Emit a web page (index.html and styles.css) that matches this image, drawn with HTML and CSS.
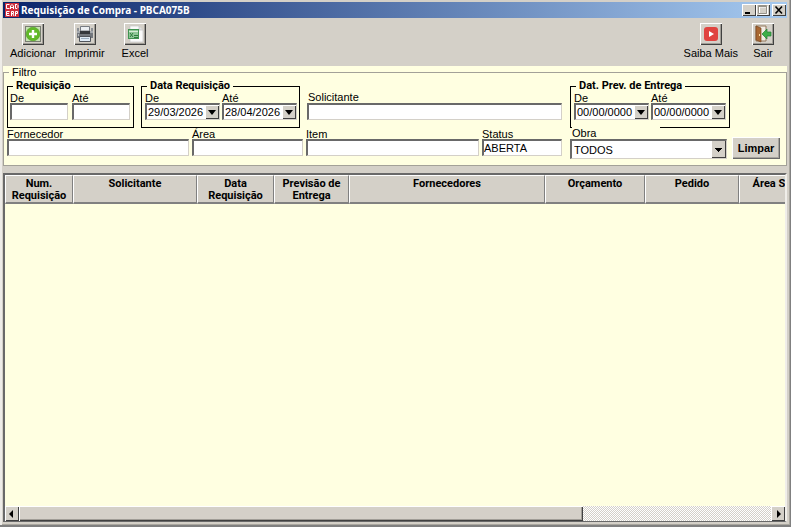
FILE: index.html
```html
<!DOCTYPE html>
<html lang="pt-BR">
<head>
<meta charset="utf-8">
<title>Requisição de Compra - PBCA075B</title>
<link rel="stylesheet" href="styles.css">
</head>
<body>
<main class="window">
  <header class="titlebar">
    <svg class="app-icon" viewBox="0 0 14 14" aria-hidden="true"><rect width="14" height="14" fill="#cf2c3c"/><g fill="none" stroke="#fff"><path d="M4.500 1.500H1.500V5.500H4.500M5.500 6V3L7 1.500L8.500 3V6M5.500 4.500H8.500M10.500 1.500V5.500H12L13 4.500V2.500L12 1.500H10M4.500 8.500H1.500V12.500H4.500M1.500 10.500H4M6.500 13V8.500H8.500V10.500H6.500M8 11L9 13M10.500 13V8.500H12.500V10.500H10.500"/></g></svg>
    <h1 class="title">Requisição de Compra - PBCA075B</h1>
    <div class="controls">
      <button class="control" type="button" aria-label="Minimizar"><svg viewBox="0 0 12 10"><path d="M2 8H7" stroke="#000" stroke-width="2"/></svg></button>
      <button class="control" type="button" aria-label="Maximizar"><svg viewBox="0 0 12 10"><path d="M2.500 1.500H10.500V9.500H2.500ZM2 2H11" stroke="#fff" fill="none"/><path d="M1.500 0.500H9.500V8.500H1.500ZM1 1.500H10" stroke="#969289" fill="none"/></svg></button>
      <button class="control close" type="button" aria-label="Fechar"><svg viewBox="0 0 12 10"><path d="M2.500 1.500L9 8.500M9 1.500L2.500 8.500" stroke="#000" stroke-width="1.600"/></svg></button>
    </div>
  </header>

  <nav class="toolbar">
    <button class="tool" type="button">
      <span class="tool-face"><svg viewBox="0 0 18 18"><rect x="1.500" y="1.500" width="15" height="15" fill="#c8e2b4" stroke="#222" stroke-dasharray="1 1"/><circle cx="9" cy="9" r="6.800" fill="#62b928" stroke="#4c9e1f" stroke-width=".6"/><path d="M9 5V13M5 9H13" stroke="#fff" stroke-width="2.400"/></svg></span>
      Adicionar
    </button>
    <button class="tool" type="button">
      <span class="tool-face"><svg viewBox="0 0 18 18"><path d="M4.500 1.500H13.500V6H4.500Z" fill="#eceff2" stroke="#777b82"/><path d="M1 3H3V7H1ZM15 3H17V7H15Z" fill="#8c9096"/><path d="M1 6H17V13H1Z" fill="#73777d"/><path d="M1 6H17V8H1Z" fill="#a5a9ae"/><path d="M4 6H14V9H4Z" fill="#34373c"/><path d="M3.500 11.500H14.500V16.500H3.500Z" fill="#dfeaf5" stroke="#50545b"/><path d="M5 13.500H13" stroke="#9cafc2"/><path d="M2 10H3" stroke="#fff"/></svg></span>
      Imprimir
    </button>
    <button class="tool excel" type="button">
      <span class="tool-face"><svg viewBox="0 0 18 18"><path d="M4 1H13L17 5V17H4Z" fill="#fafafa" stroke="#c4c4c4" stroke-width=".7"/><path d="M13 1V5H17" fill="#e0e0e0" stroke="#bbb" stroke-width=".6"/><rect x="2.500" y="4.500" width="10" height="9" fill="#8fc797" stroke="#3f9350"/><path d="M3 6.500H12" stroke="#d6ecd6"/><path d="M4 8L7 12M7 8L4 12M8 10.500H12M8 12.500H12" fill="none" stroke="#2d7d3e"/></svg></span>
      Excel
    </button>
    <span class="spacer"></span>
    <button class="tool" type="button">
      <span class="tool-face"><svg viewBox="0 0 18 18"><rect x="2" y="2" width="14" height="14" rx="3" fill="#e04440"/><path d="M7 6L12 9L7 12Z" fill="#fff"/></svg></span>
      Saiba Mais
    </button>
    <button class="tool exit" type="button">
      <span class="tool-face"><svg viewBox="0 0 18 18"><path d="M2 1H12V16H2Z" fill="#f2ede5" stroke="#91765a"/><path d="M2 1L7 3V17L2 15Z" fill="#a96833" stroke="#75431e" stroke-width=".7"/><path d="M5.500 9V11" stroke="#ffe0a0"/><path d="M8 9L13 4V7H17V11H13V14Z" fill="#3eae49" stroke="#238034" stroke-width=".7"/></svg></span>
      Sair
    </button>
  </nav>

  <form class="filter-panel">
    <fieldset class="filter">
      <legend class="filter-title">Filtro</legend>
      <div class="filter-columns">
        <div class="column-main">
          <div class="row">
            <fieldset class="group">
              <legend>Requisição</legend>
              <div class="pair number-pair">
                <div class="field"><label for="req-de">De</label><input class="box" id="req-de"></div>
                <div class="field"><label for="req-ate">Até</label><input class="box" id="req-ate"></div>
              </div>
            </fieldset>
            <fieldset class="group">
              <legend>Data Requisição</legend>
              <div class="pair">
                <div class="field"><label for="data-de">De</label><div class="date box"><input id="data-de" value="29/03/2026"><button class="drop" type="button" aria-label="Abrir calendário"></button></div></div>
                <div class="field"><label for="data-ate">Até</label><div class="date box"><input id="data-ate" value="28/04/2026"><button class="drop" type="button" aria-label="Abrir calendário"></button></div></div>
              </div>
            </fieldset>
            <div class="field requester grow"><label for="solicitante">Solicitante</label><input class="box" id="solicitante"></div>
          </div>
          <div class="row row-lower">
            <div class="field supplier"><label for="fornecedor">Fornecedor</label><input class="box" id="fornecedor"></div>
            <div class="field area"><label for="area">Área</label><input class="box" id="area"></div>
            <div class="field grow"><label for="item">Item</label><input class="box" id="item"></div>
            <div class="field status"><label for="status">Status</label><input class="box" id="status" value="ABERTA"></div>
          </div>
        </div>
        <div class="column-side">
          <fieldset class="group delivery">
            <legend>Dat. Prev. de Entrega</legend>
            <div class="pair">
              <div class="field"><label for="prev-de">De</label><div class="date box"><input id="prev-de" value="00/00/0000"><button class="drop" type="button" aria-label="Abrir calendário"></button></div></div>
              <div class="field"><label for="prev-ate">Até</label><div class="date box"><input id="prev-ate" value="00/00/0000"><button class="drop" type="button" aria-label="Abrir calendário"></button></div></div>
            </div>
          </fieldset>
          <div class="side-lower">
            <div class="field work"><label for="obra">Obra</label><select class="box" id="obra"><option>TODOS</option></select></div>
            <button class="clear" type="reset">Limpar</button>
          </div>
        </div>
      </div>
    </fieldset>
  </form>

  <section class="grid">
    <div class="grid-view">
      <table>
        <colgroup><col class="c-num"><col class="c-sol"><col class="c-data"><col class="c-prev"><col class="c-forn"><col class="c-orc"><col class="c-ped"><col class="c-area"></colgroup>
        <thead><tr><th>Num. Requisição</th><th>Solicitante</th><th>Data Requisição</th><th>Previsão de Entrega</th><th>Fornecedores</th><th>Orçamento</th><th>Pedido</th><th>Área Solicitante</th></tr></thead>
        <tbody></tbody>
      </table>
    </div>
    <div class="scrollbar">
      <button class="scroll-button" type="button" aria-label="Rolar à esquerda"><svg viewBox="0 0 8 8"><path d="M5 0V8L1 4Z"/></svg></button>
      <div class="track"><div class="thumb"></div></div>
      <button class="scroll-button" type="button" aria-label="Rolar à direita"><svg viewBox="0 0 8 8"><path d="M3 0V8L7 4Z"/></svg></button>
    </div>
  </section>
</main>
</body>
</html>
```
FILE: styles.css
```css
:root {
  --face: #d4d0c8;
  --cream: #ffffe1;
  --shadow: #808080;
  --dark: #404040;
}
* { box-sizing: border-box; }
body {
  margin: 0;
  color: #000;
  font: 11px/12px "Liberation Sans", Arial, sans-serif;
}
button, input, select { font: inherit; color: inherit; margin: 0; }
button { padding: 0; border: 0; background: var(--face); }
svg { display: block; }

.window {
  display: flex;
  flex-direction: column;
  height: 100vh;
  padding: 2px 3px 3px;
  background: var(--face);
  border: solid;
  border-width: 0 1px 2px 0;
  border-color: #808080;
  box-shadow: inset 2px 0 #eeece8, inset -1px -1px #aaa79f;
}

.titlebar {
  display: flex;
  align-items: center;
  height: 16px;
  padding: 0 1px 0 2px;
  background: linear-gradient(90deg, #0a246a, #a6caf0);
}
.app-icon { width: 14px; height: 14px; }
.title {
  flex: 1;
  margin: 0 0 0 2px;
  color: #fff;
  font: bold 10px/16px "Noto Sans", Tahoma, sans-serif;
}
.controls { display: flex; }
.control {
  width: 14px;
  height: 12px;
  background: var(--face);
  box-shadow: inset 1px 1px #fff, inset -1px -1px var(--dark);
}
.control.close { margin-left: 2px; }
.control svg { width: 12px; height: 10px; margin: auto; }

.toolbar {
  display: flex;
  align-items: flex-start;
  gap: 9px;
  height: 48px;
  padding: 5px 13px 0 7px;
}
.tool {
  display: flex;
  flex-direction: column;
  align-items: center;
  gap: 2px;
  background: none;
  white-space: nowrap;
}
.tool-face {
  padding: 2px;
  background: var(--face);
  box-shadow: inset 1px 1px #fff, inset -1px -1px var(--dark), inset -2px -2px #a09d96;
}
.tool-face svg { width: 18px; height: 18px; }
.excel { margin-left: 8px; }
.exit { margin-left: 5px; }
.spacer { flex: 1; }

.filter-panel { background: var(--cream); }
fieldset { margin: 0; min-width: 0; }
.filter {
  padding: 2px 6px 6px 3px;
  border: 1px solid #a3a198;
}
.filter-title { margin-left: 2px; padding: 0 3px; }
.filter-columns { display: flex; gap: 8px; }
.column-main { flex: 1; min-width: 0; }
.row { display: flex; gap: 7px; align-items: flex-end; height: 48px; }
.row-lower { gap: 3px; height: auto; }
.group {
  flex: none;
  height: 48px;
  padding: 0 2px;
  border: 1px solid #000;
}
legend { line-height: 12px; }
.group legend { margin-left: 3px; padding: 0 3px; }
.group legend, th { font-family: Roboto, "Liberation Sans", sans-serif; font-weight: bold; }
.pair { display: flex; gap: 2px; padding-left: 1px; }
.number-pair { gap: 4px; padding: 0 1px 0 0; }
.field { display: flex; flex-direction: column; min-width: 0; }
.field label { padding-top: 2px; line-height: 9px; }
.grow { flex: 1; }
.box {
  width: 100%;
  height: 17px;
  padding: 0;
  background: #fff;
  border: solid;
  border-width: 2px 1px 1px 2px;
  border-color: #696969 #d4d0c8 #d4d0c8 #696969;
  border-radius: 0;
  outline: 0;
}
.number-pair .field { width: 58px; }
.date { display: flex; width: 75px; }
.date input { flex: 1; min-width: 0; padding: 0 0 0 1px; border: 0; background: none; outline: 0; }
.drop {
  display: grid;
  place-items: center;
  width: 14px;
  box-shadow: inset 1px 1px #fff, inset -1px -1px var(--dark);
}
.drop::before {
  content: "";
  border: solid transparent;
  border-width: 5px 4px 0;
  border-top-color: #000;
}
.requester { padding-bottom: 8px; }
.requester label { padding: 0 0 1px 1px; }
.supplier { width: 182px; }
.area { width: 111px; }
.status { width: 80px; }

.delivery { width: 160px; }
.side-lower { display: flex; align-items: flex-end; gap: 5px; }
.work { width: 157px; margin: -1px 0 0; }
.work label { position: relative; width: 88px; margin-left: 2px; padding: 0; line-height: 12px; background: var(--cream); }
.work select {
  height: 20px;
  padding-left: 2px;
  appearance: none;
  background:
    linear-gradient(#000, #000) right 4px top 7px / 7px 1px no-repeat,
    linear-gradient(#000, #000) right 5px top 8px / 5px 1px no-repeat,
    linear-gradient(#000, #000) right 6px top 9px / 3px 1px no-repeat,
    linear-gradient(#000, #000) right 7px top 10px / 1px 1px no-repeat,
    linear-gradient(#404040, #404040) right bottom / 1px 100% no-repeat,
    linear-gradient(#404040, #404040) right bottom / 14px 1px no-repeat,
    linear-gradient(var(--face), var(--face)) right / 14px 100% no-repeat,
    #fff;
}
.clear {
  width: 48px;
  height: 22px;
  font-weight: bold;
  box-shadow: inset 1px 1px #fff, inset -1px -1px #696969, inset -2px -2px #a8a59d;
}

.grid {
  flex: 1;
  display: flex;
  flex-direction: column;
  min-height: 0;
  margin-top: 7px;
  border: solid;
  border-width: 2px 2px 1px;
  border-color: #696969 #f0eee9 #696969 #696969;
  background: var(--cream);
}
.grid-view { flex: 1; min-height: 0; overflow: hidden; }
table { width: 840px; table-layout: fixed; border-collapse: separate; border-spacing: 0; }
th {
  height: 29px;
  padding: 2px 2px 0;
  vertical-align: top;
  background: var(--face);
  border: solid;
  border-width: 1px 1px 2px;
  border-color: #fff #808080 #808080 #fff;
}
.c-num { width: 68px; }
.c-sol { width: 124px; }
.c-data { width: 77px; }
.c-prev { width: 75px; }
.c-forn { width: 196px; }
.c-orc { width: 100px; }
.c-ped { width: 94px; }
.c-area { width: 106px; }

.scrollbar { display: flex; height: 15px; }
.scroll-button {
  display: grid;
  place-items: center;
  width: 14px;
  box-shadow: inset 1px 1px #fff, inset -1px -1px var(--dark);
}
.scroll-button svg { width: 8px; height: 8px; }
.track { flex: 1; background: repeating-conic-gradient(#fff 0 25%, #d4d0c8 0 50%) 0 0 / 2px 2px; }
.thumb {
  width: 75%;
  height: 100%;
  background: var(--face);
  box-shadow: inset 1px 1px #fff, inset -1px -1px var(--dark), inset -2px -2px #a09d96;
}
```
